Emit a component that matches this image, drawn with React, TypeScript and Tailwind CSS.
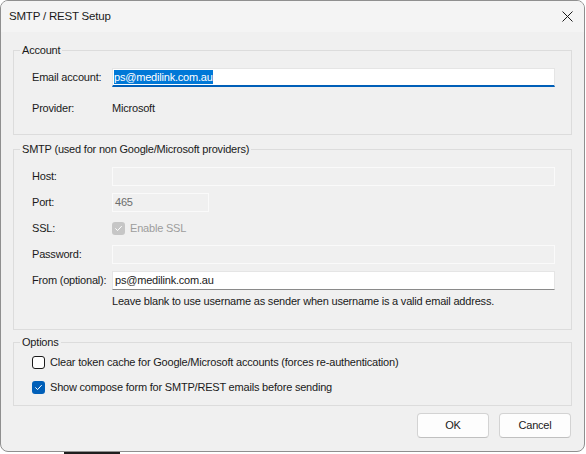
import React from 'react';

const font = "font-['Segoe_UI','Liberation_Sans',Arial,sans-serif]";

const Check: React.FC<{ color?: string }> = ({ color = '#ffffff' }) => (
  <svg width="9" height="9" viewBox="0 0 10 10" fill="none">
    <path d="M1.8 5.2 L4 7.3 L8.3 2.6" stroke={color} strokeWidth="1.1" strokeLinecap="round" strokeLinejoin="round" />
  </svg>
);

const Group: React.FC<{ title: string; className?: string; children: React.ReactNode }> = ({
  title,
  className = '',
  children,
}) => (
  <fieldset className={`border border-[#dcdcdc] ${className}`}>
    <legend className="ml-[6px] px-[2px] leading-[14px] text-[#1a1a1a]">{title}</legend>
    {children}
  </fieldset>
);

const Row: React.FC<{ label: string; children: React.ReactNode }> = ({ label, children }) => (
  <div className="flex items-center h-[19px]">
    <span className="w-[80px] shrink-0">{label}</span>
    {children}
  </div>
);

const DisabledBox: React.FC<{ className?: string; value?: string }> = ({ className = '', value }) => (
  <div className={`h-[19px] border border-[#fafafa] bg-[#f0f0f0] flex items-center px-[2px] text-[#6d6d6d] ${className}`}>
    {value}
  </div>
);

export default function App() {
  return (
    <div className={`w-[586px] h-[454px] bg-white text-[11px] tracking-[-0.2px] text-[#1a1a1a] ${font}`}>
      <div className="w-[585px] h-[452px] border border-[#8f8f8f] rounded-[8px] bg-[#f0f0f0] overflow-hidden flex flex-col">
        {/* Title bar */}
        <div className="h-[31px] shrink-0 bg-[#f4f4f4] flex items-center justify-between pl-[8px] pr-[10px]">
          <span className="text-[11.5px] text-[#1a1a1a]">SMTP / REST Setup</span>
          <svg width="11" height="11" viewBox="0 0 11 11" className="mr-[1px]">
            <path d="M0.5 0.5 L10.5 10.5 M10.5 0.5 L0.5 10.5" stroke="#1a1a1a" strokeWidth="1" />
          </svg>
        </div>

        <div className="flex flex-col px-[12px] pt-[11px]">
          <Group title="Account">
            <div className="flex flex-col gap-[12px] pl-[18px] pr-[16px] pt-[11px] pb-[16px]">
              <Row label="Email account:">
                <div className="flex-1 h-[19px] bg-white border border-[#e5e5e5] border-b-2 border-b-[#005fb8] flex items-center px-[1px]">
                  <span className="bg-[#0078d7] text-white leading-[14px]">ps@medilink.com.au</span>
                </div>
              </Row>
              <Row label="Provider:">
                <span>Microsoft</span>
              </Row>
            </div>
          </Group>

          <Group title="SMTP (used for non Google/Microsoft providers)" className="mt-[7px]">
            <div className="flex flex-col gap-[7px] pl-[18px] pr-[16px] pt-[11px] pb-[21px]">
              <Row label="Host:">
                <DisabledBox className="flex-1" />
              </Row>
              <Row label="Port:">
                <DisabledBox className="w-[97px]" value="465" />
              </Row>
              <Row label="SSL:">
                <div className="flex items-center gap-[5px]">
                  <div className="w-[13px] h-[13px] rounded-[3px] bg-[#c6c6c6] flex items-center justify-center">
                    <Check />
                  </div>
                  <span className="text-[#9d9d9d]">Enable SSL</span>
                </div>
              </Row>
              <Row label="Password:">
                <DisabledBox className="flex-1" />
              </Row>
              <Row label="From (optional):">
                <div className="flex-1 h-[19px] bg-white border border-[#e5e5e5] border-b-[#8a8a8a] flex items-center px-[2px]">
                  ps@medilink.com.au
                </div>
              </Row>
              <div className="pl-[80px] -mt-[3px] leading-[14px]">
                Leave blank to use username as sender when username is a valid email address.
              </div>
            </div>
          </Group>

          <Group title="Options" className="mt-[5px]">
            <div className="flex flex-col gap-[6px] pl-[18px] pt-[4px] pb-[8px]">
              <div className="flex items-center gap-[5px] h-[19px]">
                <div className="w-[13px] h-[13px] rounded-[3px] border border-[#1b1b1b] bg-white" />
                <span>Clear token cache for Google/Microsoft accounts (forces re-authentication)</span>
              </div>
              <div className="flex items-center gap-[5px] h-[19px]">
                <div className="w-[13px] h-[13px] rounded-[3px] bg-[#005fb8] flex items-center justify-center">
                  <Check />
                </div>
                <span>Show compose form for SMTP/REST emails before sending</span>
              </div>
            </div>
          </Group>

          <div className="flex justify-end gap-[10px] mt-[7px] pr-[1px]">
            <button className="w-[72px] h-[25px] rounded-[4px] bg-[#fdfdfd] border border-[#d3d3d3] border-b-[#c0c0c0] text-[11px] text-[#1a1a1a]">
              OK
            </button>
            <button className="w-[72px] h-[25px] rounded-[4px] bg-[#fdfdfd] border border-[#d3d3d3] border-b-[#c0c0c0] text-[11px] text-[#1a1a1a]">
              Cancel
            </button>
          </div>
        </div>
      </div>
      <div className="flex h-[2px]">
        <div className="w-[64px]" />
        <div className="w-[56px] bg-[#1e1e1e]" />
      </div>
    </div>
  );
}
